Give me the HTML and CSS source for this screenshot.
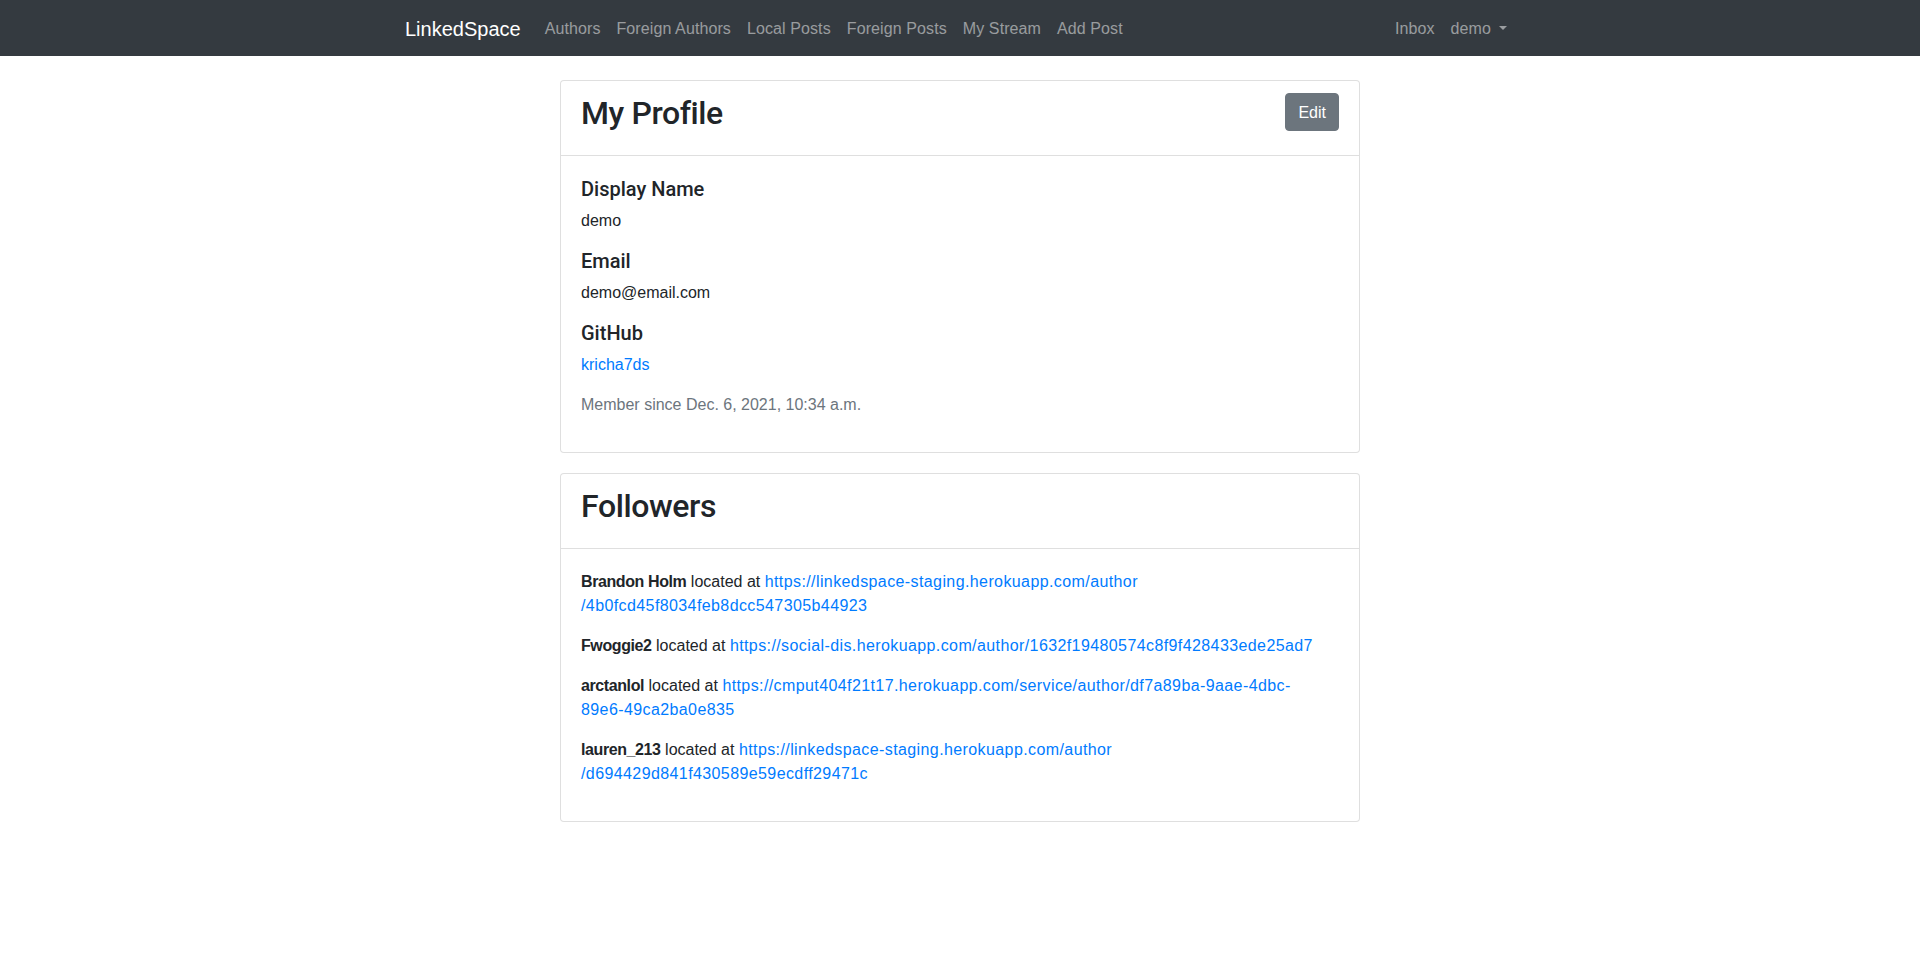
FILE: index.html
```html
<!DOCTYPE html>
<html lang="en">
<head>
<meta charset="utf-8">
<title>LinkedSpace - My Profile</title>
<link rel="stylesheet" href="styles.css">
</head>
<body>
<nav class="navbar">
  <div class="nav-container">
    <a class="brand" href="#">LinkedSpace</a>
    <ul class="nav-list">
      <li><a class="nav-link" href="#">Authors</a></li>
      <li><a class="nav-link" href="#">Foreign Authors</a></li>
      <li><a class="nav-link" href="#">Local Posts</a></li>
      <li><a class="nav-link" href="#">Foreign Posts</a></li>
      <li><a class="nav-link" href="#">My Stream</a></li>
      <li><a class="nav-link" href="#">Add Post</a></li>
    </ul>
    <ul class="nav-list nav-right">
      <li><a class="nav-link" href="#">Inbox</a></li>
      <li><a class="nav-link dropdown-toggle" href="#">demo</a></li>
    </ul>
  </div>
</nav>

<main class="content">
  <section class="card">
    <div class="card-header">
      <h2 class="card-title">My Profile</h2>
      <button class="btn-edit" type="button">Edit</button>
    </div>
    <div class="card-body">
      <h5 class="field-label">Display Name</h5>
      <p class="field-value">demo</p>
      <h5 class="field-label">Email</h5>
      <p class="field-value">demo@email.com</p>
      <h5 class="field-label">GitHub</h5>
      <p class="field-value"><a class="link" href="#">kricha7ds</a></p>
      <p class="muted">Member since Dec. 6, 2021, 10:34 a.m.</p>
    </div>
  </section>

  <section class="card">
    <div class="card-header">
      <h2 class="card-title">Followers</h2>
    </div>
    <div class="card-body">
      <p class="follower"><b>Brandon Holm</b> located at <a class="link url" href="#">https://linkedspace-staging.herokuapp.com/author<br>/4b0fcd45f8034feb8dcc547305b44923</a></p>
      <p class="follower"><b>Fwoggie2</b> located at <a class="link url" href="#">https://social-dis.herokuapp.com/author/1632f19480574c8f9f428433ede25ad7</a></p>
      <p class="follower"><b>arctanlol</b> located at <a class="link url" href="#">https://cmput404f21t17.herokuapp.com/service/author/df7a89ba-9aae-4dbc-<br>89e6-49ca2ba0e835</a></p>
      <p class="follower"><b>lauren_213</b> located at <a class="link url" href="#">https://linkedspace-staging.herokuapp.com/author<br>/d694429d841f430589e59ecdff29471c</a></p>
    </div>
  </section>
</main>
</body>
</html>
```

FILE: styles.css
```css
* {
  box-sizing: border-box;
}

html, body {
  margin: 0;
  padding: 0;
}

body {
  font-family: "Liberation Sans", Arial, Helvetica, sans-serif;
  font-size: 16px;
  line-height: 1.5;
  color: #212529;
  background: #fff;
}

a {
  text-decoration: none;
}

.navbar {
  background: #343a40;
  height: 56px;
}

.nav-container {
  max-width: 1140px;
  margin: 0 auto;
  padding: 0 15px;
  height: 56px;
  display: flex;
  align-items: center;
}

.brand {
  color: #fff;
  font-size: 20px;
  line-height: 30px;
  padding: 6px 0 4px;
  margin-right: 16px;
  white-space: nowrap;
}

.nav-list {
  list-style: none;
  margin: 0;
  padding: 0;
  display: flex;
}

.nav-right {
  margin-left: auto;
}

.nav-link {
  display: block;
  padding: 9px 8px 7px;
  color: rgba(255, 255, 255, 0.5);
  line-height: 24px;
  letter-spacing: 0.1px;
  white-space: nowrap;
}

.dropdown-toggle::after {
  content: "";
  display: inline-block;
  margin-left: 0.5em;
  vertical-align: 0.255em;
  border-top: 0.3em solid;
  border-right: 0.3em solid transparent;
  border-left: 0.3em solid transparent;
  border-bottom: 0;
}

.content {
  width: 800px;
  margin: 24px auto 0;
}

.card {
  border: 1px solid rgba(0, 0, 0, 0.125);
  border-radius: 4px;
  background: #fff;
  margin-bottom: 20px;
}

.card-header {
  display: flex;
  justify-content: space-between;
  align-items: flex-start;
  padding: 12px 20px;
  border-bottom: 1px solid rgba(0, 0, 0, 0.125);
}

.card-title {
  margin: 1px 0 11px;
  font-family: Roboto, "Liberation Sans", Arial, sans-serif;
  font-size: 32px;
  font-weight: 500;
  line-height: 38px;
  letter-spacing: -0.4px;
}

.btn-edit {
  font-family: inherit;
  font-size: 16px;
  line-height: 24px;
  padding: 7px 12px 5px;
  color: #fff;
  background: #6c757d;
  border: 1px solid #6c757d;
  border-radius: 4px;
  cursor: pointer;
}

.card-body {
  padding: 21px 20px 19px;
}

.field-label {
  margin: 0 0 8px;
  font-family: Roboto, "Liberation Sans", Arial, sans-serif;
  font-size: 20px;
  font-weight: 500;
  line-height: 24px;
}

.field-value {
  margin: 0 0 16px;
}

.link {
  color: #007bff;
}

.url {
  letter-spacing: 0.4px;
}

.muted {
  margin: 0 0 16px;
  color: #6c757d;
}

.follower {
  margin: 0 0 16px;
}

.follower b {
  font-weight: 700;
  letter-spacing: -0.4px;
}
```
